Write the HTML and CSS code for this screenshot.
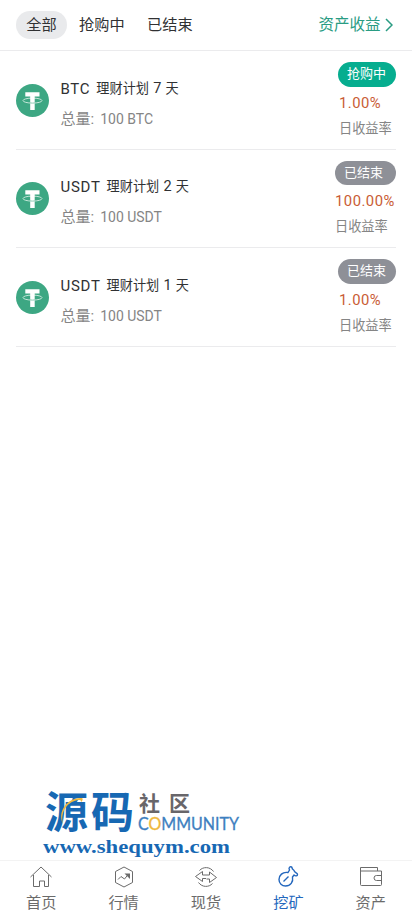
FILE: index.html
```html
<!DOCTYPE html>
<html lang="zh-CN">
<head>
<meta charset="utf-8">
<meta name="viewport" content="width=device-width, initial-scale=1">
<title>理财计划</title>
<link rel="stylesheet" href="styles.css">
</head>
<body>
<svg class="defs" aria-hidden="true">
  <symbol id="tether" viewBox="0 0 33 33">
    <circle cx="16.5" cy="16.5" r="16.5" fill="#3da783"/>
    <ellipse cx="16.5" cy="16.600" rx="9.500" ry="2.500" fill="none" stroke="#c3e6d8" stroke-width="1"/>
    <path d="M9.300 8.200h14.200v4.200h-4.800V26h-4.500V12.400H9.300z" fill="#fff"/>
    <path d="M14 18.900q2.500.4 5 0" fill="none" stroke="#8ccab3" stroke-width="1"/>
  </symbol>
</svg>
<div class="app">
  <header class="topbar">
    <nav class="tabs">
      <a class="tab tab-active">全部</a>
      <a class="tab">抢购中</a>
      <a class="tab">已结束</a>
    </nav>
    <a class="income">资产收益<svg class="chevron" viewBox="0 0 8 14"><path d="M1 1l6 6-6 6"/></svg></a>
  </header>

  <main class="list">
    <article class="plan">
      <svg class="coin"><use href="#tether"/></svg>
      <div class="info">
        <div class="name"><span class="symbol">BTC</span><span>理财计划 <b>7</b> 天</span></div>
        <div class="total"><span class="label">总量:</span><span>100 BTC</span></div>
      </div>
      <div class="side">
        <div class="badge badge-open">抢购中</div>
        <div class="rate">1.00%</div>
        <div class="caption">日收益率</div>
      </div>
    </article>
    <article class="plan">
      <svg class="coin"><use href="#tether"/></svg>
      <div class="info">
        <div class="name"><span class="symbol">USDT</span><span>理财计划 <b>2</b> 天</span></div>
        <div class="total"><span class="label">总量:</span><span>100 USDT</span></div>
      </div>
      <div class="side side-wide">
        <div class="badge">已结束</div>
        <div class="rate">100.00%</div>
        <div class="caption">日收益率</div>
      </div>
    </article>
    <article class="plan">
      <svg class="coin"><use href="#tether"/></svg>
      <div class="info">
        <div class="name"><span class="symbol">USDT</span><span>理财计划 <b>1</b> 天</span></div>
        <div class="total"><span class="label">总量:</span><span>100 USDT</span></div>
      </div>
      <div class="side">
        <div class="badge">已结束</div>
        <div class="rate">1.00%</div>
        <div class="caption">日收益率</div>
      </div>
    </article>
  </main>

  <svg class="brand" viewBox="0 0 220 95">
    <text class="brand-main" x="15" y="63" textLength="89">源码</text>
    <path d="M33 59c-6-12 4-27 19-26 1 0 1 3-1 4 0-2-1-2-2-2-11 1-19 11-16 24z" fill="#efb83e"/>
    <text class="brand-sub" x="109" y="46" textLength="51">社区</text>
    <text class="brand-en" x="108" y="64.500" textLength="101" lengthAdjust="spacingAndGlyphs">C<tspan class="brand-o">O</tspan>MMUNITY</text>
    <text class="brand-url" x="13" y="88" textLength="187" lengthAdjust="spacingAndGlyphs">www.shequym.com</text>
  </svg>

  <nav class="dock">
    <a class="dock-item">
      <svg class="icon" viewBox="0 0 24 24"><path d="M1.500 12L12 2l10.500 10M4.500 10v11.500h6v-5.500h5v5.500h4V10"/></svg>
      <span>首页</span>
    </a>
    <a class="dock-item">
      <svg class="icon" viewBox="0 0 24 24"><path d="M12 2l8.500 4.500v11L12 22l-8.500-4.500v-11zM6 14.500l3-3 3.500 2.500 4-5"/><path class="solid" d="M12.500 8.500H18V14z"/></svg>
      <span>行情</span>
    </a>
    <a class="dock-item">
      <svg class="icon" viewBox="0 0 24 24"><path d="M5.500 5.500C9 1.500 16 1.500 19.500 6.500M18.500 18.500C15 22.500 8 22.500 4.500 17.500M8.500 6.500L1.500 11.500l7 5v-3h3.500M8.500 6.500v3.500h7V7l7 5.500-7 5V14h-3"/></svg>
      <span>现货</span>
    </a>
    <a class="dock-item dock-active">
      <svg class="icon icon-bold" viewBox="0 0 24 24"><path d="M12 7.500C6.500 6.500 3 10.500 3 14.500s3 6.500 6.500 6.500c5 0 8-4 7-9l1.500-2c1.500 1.500 3.500 1 3.500-.5 0-1.500-1.500-1.500-2.500-2.500s-.5-1.500-2-2.500-.5-2-1.500-2.500-3.500 0-2 3zM7.500 16.500l5-5"/></svg>
      <span>挖矿</span>
    </a>
    <a class="dock-item">
      <svg class="icon" viewBox="0 0 24 24"><path d="M18.500 6V2.500h-17v17q0 1 1 1h19q1 0 1-1V6h-21M22.500 10.500h-5a2.500 2.500 0 0 0 0 5h5"/></svg>
      <span>资产</span>
    </a>
  </nav>
</div>
</body>
</html>
```
FILE: styles.css
```css
* { box-sizing: border-box; }
body {
  margin: 0;
  background: #fff;
  color: #303133;
  font-family: "Liberation Sans", "Noto Sans CJK SC", sans-serif;
}
.defs { display: none; }
.app { height: 915px; display: flex; flex-direction: column; overflow: hidden; }
.topbar {
  height: 51px;
  flex: none;
  padding: 0 19.500px 0 16px;
  border-bottom: 1px solid #ebebed;
  display: flex;
  align-items: center;
  justify-content: space-between;
}
.tabs { display: flex; align-items: center; gap: 3px; font-size: 15.200px; }
.tab { height: 28px; line-height: 27px; padding: 0 10px; }
.tab + .tab { padding-left: 9px; }
.tab:last-child { padding-left: 9.500px; }
.tab-active { border-radius: 14px; background: #e9eaec; width: 51px; text-align: center; }
.income { color: #2a9c83; font-size: 15.500px; line-height: 22px; display: flex; align-items: center; gap: 4px; }
.chevron { width: 8px; height: 14px; fill: none; stroke: currentColor; stroke-width: 1.500; }
.list { flex: 1; padding: 0 16px; }
.plan {
  height: 98.500px;
  border-bottom: 1px solid #ebebed;
  display: flex;
  align-items: center;
}
.coin { width: 33px; height: 33px; flex: none; margin-top: 1px; }
.info { flex: 1; padding: 8px 0 0 11.500px; }
.name { height: 30px; line-height: 30px; font-size: 13.200px; display: flex; white-space: pre; }
.name b { font: 400 14.500px Roboto, sans-serif; line-height: 1; margin: 0 .5px; }
.symbol { font: 400 15px/30px Roboto, sans-serif; margin-right: 6px; letter-spacing: .7px; }
.total { height: 30px; line-height: 30px; font-family: Roboto, "Noto Sans CJK SC", sans-serif; font-size: 14px; color: #858585; display: flex; }
.label { font-size: 15px; margin-right: 6px; }
.side { width: 58px; padding-top: 1px; }
.side-wide { width: 61px; }
.badge {
  height: 24.500px;
  border-radius: 12.500px;
  background: #8e9097;
  color: #fff;
  font-size: 13px;
  line-height: 24px;
  padding-left: 9px;
}
.badge-open { background: #06ad8f; }
.rate { height: 30px; font: 400 14.800px/33px Roboto, sans-serif; letter-spacing: .5px; color: #c95c35; padding-left: 1px; }
.caption { height: 22px; line-height: 24px; font-size: 13.200px; color: #858585; padding-left: 1px; }
.side-wide .rate, .side-wide .caption { padding-left: 0; }
.brand { width: 220px; height: 95px; margin-left: 30px; flex: none; }
.brand-main { font: 700 43px "Noto Sans CJK SC", sans-serif; fill: #1768b3; }
.brand-sub { font: 700 21px "Noto Sans CJK SC", sans-serif; fill: #68666a; }
.brand-en { font: 400 17px Lato, sans-serif; fill: #3d80c0; stroke: #3d80c0; stroke-width: .3; }
.brand-o { fill: #efb83e; stroke: #efb83e; }
.brand-url { font: 700 19px "Liberation Serif", serif; fill: #1768b3; }
.dock {
  height: 55px;
  flex: none;
  border-top: 1px solid #f3f3f3;
  display: grid;
  grid-template-columns: repeat(5, 1fr);
}
.dock-item {
  display: flex;
  flex-direction: column;
  align-items: center;
  padding-top: 4px;
  font-size: 15.200px;
  line-height: 22px;
  color: #6b6b6b;
}
.dock-item span { margin-top: 3px; }
.dock-active { color: #2467bd; }
.icon { width: 24px; height: 24px; fill: none; stroke: currentColor; stroke-width: 1; }
.icon-bold { stroke-width: 1.400; }
.solid { fill: currentColor; stroke: none; }
```
